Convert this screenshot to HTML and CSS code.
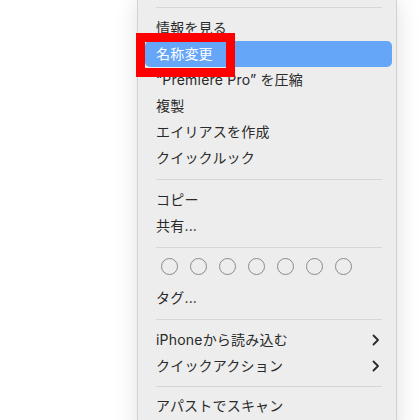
FILE: index.html
```html
<!DOCTYPE html>
<html lang="ja">
<head>
<meta charset="utf-8">
<link rel="stylesheet" href="styles.css">
</head>
<body>
<div class="stage">
  <div class="menu">
    <div class="sep"></div>
    <div class="item">情報を見る</div>
    <div class="item active">名称変更</div>
    <div class="item">“Premiere Pro” を圧縮</div>
    <div class="item">複製</div>
    <div class="item">エイリアスを作成</div>
    <div class="item">クイックルック</div>
    <div class="sep"></div>
    <div class="item">コピー</div>
    <div class="item">共有...</div>
    <div class="sep"></div>
    <div class="tags">
      <span class="dot"></span><span class="dot"></span><span class="dot"></span><span class="dot"></span><span class="dot"></span><span class="dot"></span><span class="dot"></span>
    </div>
    <div class="item">タグ...</div>
    <div class="sep"></div>
    <div class="item sub">iPhoneから読み込む<svg class="chev" viewBox="0 0 8 12" width="8" height="12"><path d="M1.5 1.5 L6 6 L1.5 10.5" fill="none" stroke="#2a2a2a" stroke-width="1.8" stroke-linecap="round" stroke-linejoin="round"/></svg></div>
    <div class="item sub">クイックアクション<svg class="chev" viewBox="0 0 8 12" width="8" height="12"><path d="M1.5 1.5 L6 6 L1.5 10.5" fill="none" stroke="#2a2a2a" stroke-width="1.8" stroke-linecap="round" stroke-linejoin="round"/></svg></div>
    <div class="sep last"></div>
    <div class="item">アパストでスキャン</div>
  </div>
  <div class="mark"></div>
</div>
</body>
</html>
```
FILE: styles.css
```css
html, body {
  margin: 0;
  padding: 0;
  background: #ffffff;
  overflow: hidden;
}
.stage {
  position: relative;
  width: 420px;
  height: 420px;
  padding-left: 137px;
  box-sizing: border-box;
  font-family: "Inter", "Noto Sans CJK JP", sans-serif;
}
.menu {
  width: 258px;
  height: 440px;
  background: #ededed;
  border-left: 1px solid #d2d2d2;
  border-right: 1px solid #d2d2d2;
  box-shadow: 0 0 22px rgba(0, 0, 0, 0.13);
  color: #2a2a2a;
  font-size: 14px;
}
.sep {
  height: 16px;
  display: flex;
  align-items: center;
  padding: 0 14px 0 18px;
}
.sep::before {
  content: "";
  flex: 1;
  height: 1px;
  background: #d6d6d6;
}
.sep:first-child {
  height: 15px;
}
.sep.last {
  height: 14px;
}
.item {
  height: 26px;
  line-height: 26px;
  margin: 0 4px 0 7px;
  padding: 0 11px;
  border-radius: 5px;
  white-space: nowrap;
  letter-spacing: 0.2px;
}
.item.active {
  background: #66a6f9;
  color: #ffffff;
}
.item.sub {
  display: flex;
  justify-content: space-between;
  align-items: center;
}
.chev {
  margin-right: 1px;
}
.tags {
  height: 30px;
  display: flex;
  gap: 12px;
  padding: 3px 0 0 23px;
  box-sizing: border-box;
}
.dot {
  width: 15px;
  height: 15px;
  border: 1.2px solid #8a8a8a;
  border-radius: 50%;
}
.mark {
  position: absolute;
  left: 136px;
  top: 33px;
  width: 81px;
  height: 26px;
  border: 9px solid #ff0000;
}
```
